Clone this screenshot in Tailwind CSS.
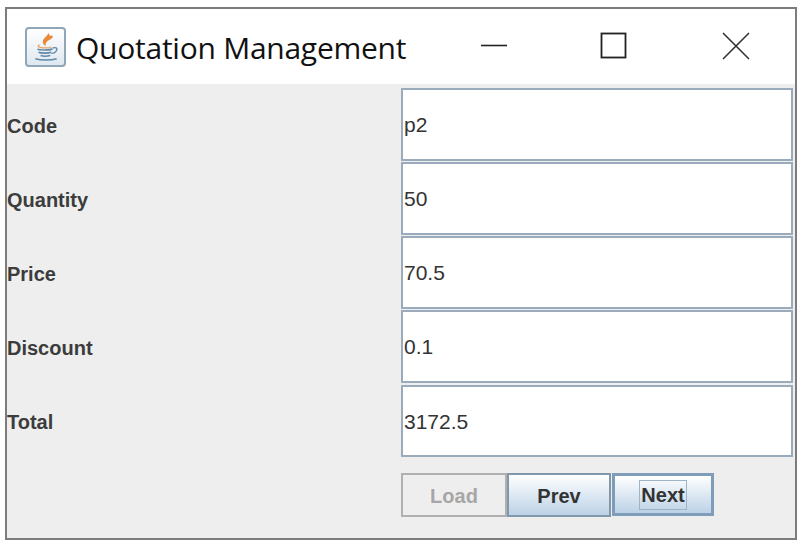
<!DOCTYPE html>
<html lang="en">
<head>
  <meta charset="UTF-8">
  <title>Quotation Management</title>
  <script src="https://cdn.jsdelivr.net/npm/@tailwindcss/browser@4"></script>
</head>
<body class="bg-white font-['Liberation_Sans',Arial,sans-serif]">
  <div class="ml-[5px] mt-[7px] w-[792px] h-[533px] border-2 border-[#7c7c7c] bg-[#eeeeee] flex flex-col">
    <!-- title bar -->
    <div class="h-[75px] bg-white flex items-center shrink-0">
      <div class="ml-[18px] w-[41px] h-[40px] rounded-[4px] border-2 border-[#8fa6b8] bg-gradient-to-b from-white to-[#dfe8f0] flex items-center justify-center">
        <svg width="30" height="32" viewBox="0 0 28 30" fill="none">
          <path d="M16 0c2 4-5 6-5 10 0 2 1 3 3 4-1-2 0-4 4-6 3-2 3-3 1-4-1 1-2 1-3-4z" fill="#e98a3a"/>
          <path d="M8 13c-2 1-2 2 1 2.500 3 .5 8 .3 10-.5" stroke="#e9a36a" stroke-width="1.200"/>
          <path d="M6 17c2 1 11 1 14 0M7 20c2 1 9 1 12 0M9 23c2 .7 6 .7 9 0" stroke="#5e89a8" stroke-width="1.500"/>
          <path d="M20 16c3-1 5 0 4 2s-3 3-5 3" stroke="#5e89a8" stroke-width="1.300"/>
          <path d="M4 26c5 1.500 15 1.500 20 0" stroke="#5e89a8" stroke-width="1.500"/>
        </svg>
      </div>
      <span class="ml-[10px] pt-[2px] text-[30px] leading-none tracking-[-0.25px] text-[#111] font-['Open_Sans',sans-serif]">Quotation Management</span>
      <div class="ml-auto mb-[2px] flex items-center">
        <svg width="28" height="28" viewBox="0 0 28 28" class="mr-[92px]"><path d="M1 13.500h26" stroke="#222" stroke-width="1.600"/></svg>
        <svg width="28" height="28" viewBox="0 0 28 28" class="mr-[94px]"><rect x="1.500" y="1.500" width="24" height="24" fill="none" stroke="#222" stroke-width="1.800"/></svg>
        <svg width="28" height="28" viewBox="0 0 28 28" class="mr-[45px]"><path d="M1 1l26 26M27 1L1 27" stroke="#333" stroke-width="1.600"/></svg>
      </div>
    </div>
    <!-- form rows -->
    <div class="flex flex-col pt-[4px] text-[21px] text-[#333]">
      <div class="flex h-[74px]">
        <label class="w-[394px] flex items-center pt-[1px] text-[20px] font-bold text-[#3c3c3c]">Code</label>
        <div class="w-[392px] h-[73px] border-2 border-[#9aacbc] bg-white flex items-center pl-[1px] pt-[1px]">p2</div>
      </div>
      <div class="flex h-[74px]">
        <label class="w-[394px] flex items-center pt-[1px] text-[20px] font-bold text-[#3c3c3c]">Quantity</label>
        <div class="w-[392px] h-[73px] border-2 border-[#9aacbc] bg-white flex items-center pl-[1px] pt-[1px]">50</div>
      </div>
      <div class="flex h-[74px]">
        <label class="w-[394px] flex items-center pt-[1px] text-[20px] font-bold text-[#3c3c3c]">Price</label>
        <div class="w-[392px] h-[73px] border-2 border-[#9aacbc] bg-white flex items-center pl-[1px] pt-[1px]">70.5</div>
      </div>
      <div class="flex h-[75px]">
        <label class="w-[394px] flex items-center pt-[1px] text-[20px] font-bold text-[#3c3c3c]">Discount</label>
        <div class="w-[392px] h-[73px] border-2 border-[#9aacbc] bg-white flex items-center pl-[1px] pt-[1px]">0.1</div>
      </div>
      <div class="flex h-[73px]">
        <label class="w-[394px] flex items-center pt-[1px] text-[20px] font-bold text-[#3c3c3c]">Total</label>
        <div class="w-[392px] h-[72px] border-2 border-[#9aacbc] bg-white flex items-center pl-[1px] pt-[1px]">3172.5</div>
      </div>
    </div>
    <!-- buttons -->
    <div class="flex mt-[15px] ml-[394px] text-[20px] font-bold">
      <div class="w-[106px] h-[44px] border-2 border-[#b0b0b0] flex items-center justify-center pt-[1px] text-[#a6a6a6]">Load</div>
      <div class="w-[104px] h-[44px] border-2 border-[#8198ab] bg-gradient-to-b from-white to-[#bcd2e6] flex items-center justify-center pt-[1px] text-[#333]">Prev</div>
      <div class="ml-[1px] w-[102px] h-[43px] border-[3px] border-[#7f9db9] bg-gradient-to-b from-white to-[#bcd2e6] flex items-center justify-center pt-[1px] text-[#333]">
        <span class="border border-[#9db4c8] px-[1px] leading-[27px] pt-[1px]">Next</span>
      </div>
    </div>
  </div>
</body>
</html>
